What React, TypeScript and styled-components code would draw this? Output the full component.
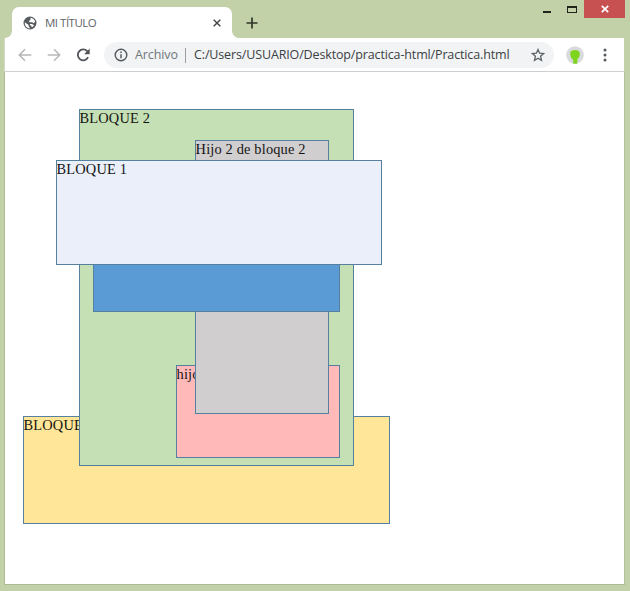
import React from "react";
import styled, { createGlobalStyle } from "styled-components";

const GlobalStyle = createGlobalStyle`
  * { box-sizing: border-box; }
  body { margin: 0; overflow: hidden; background: #c3d1a9; }
`;

const Window = styled.div`
  width: 630px;
  height: 591px;
  display: flex;
  flex-direction: column;
  padding: 0 5px 6px 4px;
  background: #c3d1a9;
  font-family: "Open Sans", "Noto Sans", sans-serif;
`;

const TitleBar = styled.header`
  display: flex;
  align-items: flex-start;
  height: 38px;
`;

const Tab = styled.div`
  position: relative;
  display: flex;
  align-items: center;
  width: 220px;
  height: 31px;
  margin: 7px 0 0 8px;
  padding: 0 10px 0 11px;
  border-radius: 7px 7px 0 0;
  background: #fff;
  &::before, &::after {
    content: "";
    position: absolute;
    bottom: 0;
    width: 7px;
    height: 7px;
  }
  &::before {
    left: -7px;
    background: radial-gradient(circle at 0 0, transparent 6.5px, #fff 7.2px);
  }
  &::after {
    right: -7px;
    background: radial-gradient(circle at 100% 0, transparent 6.5px, #fff 7.2px);
  }
`;

const TabTitle = styled.span`
  flex: 1;
  margin-left: 8px;
  font-size: 11.5px;
  line-height: 16px;
  letter-spacing: -0.5px;
  color: #606368;
`;

const NewTab = styled.div`
  display: flex;
  margin: 17px 0 0 14px;
`;

const WindowControls = styled.div`
  display: flex;
  align-items: flex-start;
  margin-left: auto;
`;

const ControlIcon = styled.div<{ $gap: number }>`
  display: flex;
  margin-right: ${(p) => p.$gap}px;
`;

const CloseWindow = styled.div`
  display: flex;
  align-items: center;
  justify-content: center;
  width: 41px;
  height: 18px;
  background: #c75050;
`;

const Toolbar = styled.nav`
  display: flex;
  align-items: center;
  height: 34px;
  margin-right: 1px;
  padding: 1px 14px 0 13px;
  background: #fff;
  border-bottom: 1px solid #cfcfcf;
  border-left: 1px solid #d3dbc4;
`;

const NavButtons = styled.div`
  display: flex;
  gap: 15px;
  width: 86px;
`;

const AddressBar = styled.div`
  display: flex;
  align-items: center;
  width: 450px;
  height: 26px;
  padding: 0 9px 0 10px;
  border-radius: 13px;
  background: #f1f3f4;
`;

const Scheme = styled.span`
  width: 50px;
  margin-left: 7px;
  font-size: 12.5px;
  line-height: 18px;
  letter-spacing: -0.1px;
  color: #70757a;
  white-space: nowrap;
`;

const Divider = styled.span`
  width: 1px;
  height: 15px;
  background: #9b9fa3;
`;

const Address = styled.span`
  flex: 1;
  margin-left: 8px;
  font-size: 12.5px;
  line-height: 18px;
  letter-spacing: -0.14px;
  color: #3c4043;
  white-space: nowrap;
`;

const Avatar = styled.div`
  display: flex;
  margin: 0 19px 0 12px;
`;

const Page = styled.main`
  position: relative;
  flex: 1;
  background: #fff;
  border: 1px solid #acbb94;
  border-top: 0;
  border-right-color: #b3c19c;
  font-family: "Liberation Serif", serif;
`;

interface BlockProps {
  $x: number;
  $y: number;
  $w: number;
  $h: number;
  $fill: string;
  $layer: number;
}

const Block = styled.div<BlockProps>`
  position: absolute;
  left: ${(p) => p.$x}px;
  top: ${(p) => p.$y}px;
  z-index: ${(p) => p.$layer};
  width: ${(p) => p.$w}px;
  height: ${(p) => p.$h}px;
  border: 1px solid #5580a0;
  background: ${(p) => p.$fill};
  color: #141414;
  font-size: 14.4px;
  line-height: 16px;
  letter-spacing: 0.16px;
  text-indent: -0.4px;
  white-space: nowrap;
`;

const Globe = () => (
  <svg width="14" height="14" viewBox="0 0 14 14">
    <circle cx="7" cy="7" r="6.5" fill="#56595d" />
    <path d="M1.8 6.3 5.6 9v1.2l1 1v1.2C3.7 12.2 1.6 9.8 1.8 6.3zM7.6 1.8c2.2.3 4 1.8 4.6 4l-1.5 1.5-1.4-1.1H6.7L5.8 5.1l1.5-.8zM8.8 8.1l2.1.9-.7 1.6-1.5.6-.4-1.4-1.6-.8.5-.9z" fill="#fff" />
  </svg>
);

const TabClose = () => (
  <svg width="10" height="10" viewBox="0 0 10 10" stroke="#45494c" strokeWidth="1.5">
    <path d="M1.7 1.7l6.6 6.6M8.3 1.7L1.7 8.3" />
  </svg>
);

const Arrow = ({ back = false }: { back?: boolean }) => (
  <svg width="14" height="14" viewBox="0 0 14 14" fill="none" stroke={back ? "#b5b5b5" : "#b9b9b9"} strokeWidth="1.5">
    {back ? <path d="M13.3 7H1.5M7 1.3 1.3 7 7 12.7" /> : <path d="M.7 7h11.8M7 1.3 12.7 7 7 12.7" />}
  </svg>
);

const Reload = () => (
  <svg width="15" height="14" viewBox="0 0 15 14">
    <path d="M12.1 9.2A5.4 5.4 0 1 1 11.2 3.2L12 4" fill="none" stroke="#515458" strokeWidth="1.8" />
    <path d="M13.7.6v5.6H8.1z" fill="#515458" />
  </svg>
);

const Info = () => (
  <svg width="14" height="14" viewBox="0 0 14 14">
    <circle cx="7" cy="7" r="5.8" fill="none" stroke="#55595d" strokeWidth="1.4" />
    <path d="M7 6.2v4M7 3.5V5" stroke="#55595d" strokeWidth="1.5" />
  </svg>
);

const Star = () => (
  <svg width="14" height="14" viewBox="0 0 14 14">
    <path d="M7 1.5l1.6 3.7 4 .4-3 2.7.9 4L7 10.2l-3.5 2.1.9-4-3-2.7 4-.4z" fill="none" stroke="#5f6368" strokeWidth="1.3" />
  </svg>
);

export default function App() {
  return (
    <Window>
      <GlobalStyle />
      <TitleBar>
        <Tab>
          <Globe />
          <TabTitle>MI TÍTULO</TabTitle>
          <TabClose />
        </Tab>
        <NewTab>
          <svg width="12" height="12" viewBox="0 0 12 12" stroke="#303529" strokeWidth="1.7">
            <path d="M6 .5v11M.5 6h11" />
          </svg>
        </NewTab>
        <WindowControls>
          <ControlIcon $gap={16}>
            <svg width="8" height="14" viewBox="0 0 8 14">
              <path d="M0 11h8v2H0z" fill="#20251c" />
            </svg>
          </ControlIcon>
          <ControlIcon $gap={7}>
            <svg width="10" height="14" viewBox="0 0 10 14">
              <path d="M0 6h10v7H0zM1 8v4h8V8z" fill="#20251c" fillRule="evenodd" />
            </svg>
          </ControlIcon>
          <CloseWindow>
            <svg width="8" height="8" viewBox="0 0 8 8" stroke="#fff" strokeWidth="1.7">
              <path d="M.8.8l6.4 6.4M7.2.8.8 7.2" />
            </svg>
          </CloseWindow>
        </WindowControls>
      </TitleBar>
      <Toolbar>
        <NavButtons>
          <Arrow back />
          <Arrow />
          <Reload />
        </NavButtons>
        <AddressBar>
          <Info />
          <Scheme>Archivo</Scheme>
          <Divider />
          <Address>C:/Users/USUARIO/Desktop/practica-html/Practica.html</Address>
          <Star />
        </AddressBar>
        <Avatar>
          <svg width="18" height="18" viewBox="0 0 18 18">
            <circle cx="9" cy="9" r="8.8" fill="#d9dadd" />
            <path d="M4.2 7.7C4 5.3 5.9 4 9 4s5 1.4 4.8 4.2c-.2 2.4-1.1 4.1-2.3 4.6l-.3 4.9H7.3l-.2-4C5.3 12.8 4.4 10.4 4.2 7.7z" fill="#7fd51e" />
          </svg>
        </Avatar>
        <svg width="4" height="14" viewBox="0 0 4 14" fill="#55595d">
          <circle cx="2" cy="2" r="1.5" />
          <circle cx="2" cy="7" r="1.5" />
          <circle cx="2" cy="12" r="1.5" />
        </svg>
      </Toolbar>
      <Page>
        <Block $x={18} $y={344} $w={367} $h={108} $fill="#ffe699" $layer={1}>BLOQUE 3</Block>
        <Block $x={74} $y={37} $w={275} $h={357} $fill="#c5e0b4" $layer={2}>BLOQUE 2</Block>
        <Block $x={171} $y={293} $w={164} $h={93} $fill="#ffb9b9" $layer={3}>hijo 3 de bloque 2</Block>
        <Block $x={190} $y={68} $w={134} $h={274} $fill="#d0cece" $layer={4}>Hijo 2 de bloque 2</Block>
        <Block $x={88} $y={138} $w={247} $h={102} $fill="#5b9bd5" $layer={5} />
        <Block $x={51} $y={88} $w={326} $h={105} $fill="#eaeff9" $layer={6}>BLOQUE 1</Block>
      </Page>
    </Window>
  );
}
